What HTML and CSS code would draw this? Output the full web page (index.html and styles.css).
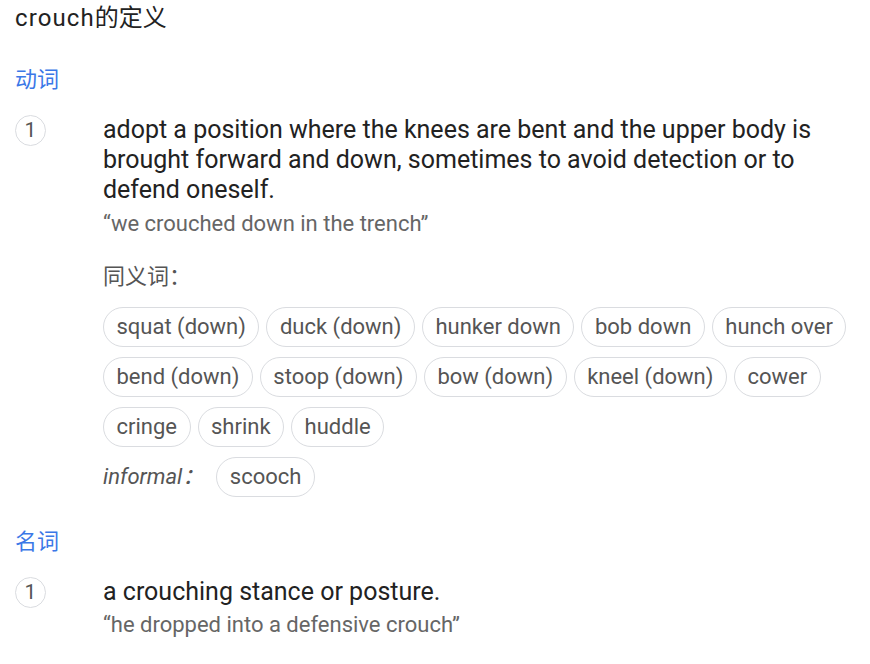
FILE: index.html
```html
<!DOCTYPE html>
<html lang="zh">
<head>
<meta charset="utf-8">
<link rel="stylesheet" href="styles.css">
</head>
<body>
<div class="page">
  <h1 class="title"><span class="headword">crouch</span>的定义</h1>

  <div class="pos">动词</div>
  <div class="sense">
    <div class="num">1</div>
    <div class="body">
      <div class="def">adopt a position where the knees are bent and the upper body is brought forward and down, sometimes to avoid detection or to defend oneself.</div>
      <div class="example">“we crouched down in the trench”</div>
      <div class="syn-label">同义词：</div>
      <div class="chips">
        <span class="chip">squat (down)</span>
        <span class="chip">duck (down)</span>
        <span class="chip">hunker down</span>
        <span class="chip">bob down</span>
        <span class="chip">hunch over</span>
        <span class="chip">bend (down)</span>
        <span class="chip">stoop (down)</span>
        <span class="chip">bow (down)</span>
        <span class="chip">kneel (down)</span>
        <span class="chip">cower</span>
        <span class="chip">cringe</span>
        <span class="chip">shrink</span>
        <span class="chip">huddle</span>
      </div>
      <div class="chips informal-row">
        <span class="reg">informal：</span>
        <span class="chip">scooch</span>
      </div>
    </div>
  </div>

  <div class="pos pos-noun">名词</div>
  <div class="sense">
    <div class="num">1</div>
    <div class="body">
      <div class="def">a crouching stance or posture.</div>
      <div class="example example-tight">“he dropped into a defensive crouch”</div>
    </div>
  </div>
</div>
</body>
</html>
```

FILE: styles.css
```css
html, body {
  margin: 0;
  padding: 0;
  background: #ffffff;
}

.page {
  padding: 0 15px;
  font-family: Roboto, "Noto Sans CJK SC", sans-serif;
  color: #222222;
  width: 840px;
}

.title {
  margin: 0;
  font-size: 24px;
  line-height: 36px;
  font-weight: 400;
  color: #222222;
}

.headword {
  letter-spacing: 1.1px;
}

.pos {
  margin-top: 29px;
  font-size: 22px;
  line-height: 30px;
  color: #3b78e7;
}

.pos-noun {
  margin-top: 30px;
}

.sense {
  display: flex;
  gap: 57px;
  margin-top: 20px;
}

.num {
  flex: none;
  box-sizing: border-box;
  width: 31px;
  height: 31px;
  border: 1px solid #dadce0;
  border-radius: 50%;
  font-size: 21px;
  line-height: 29px;
  text-align: center;
  color: #555555;
}

.body {
  flex: 1;
  min-width: 0;
}

.def {
  font-size: 25px;
  line-height: 30px;
  color: #222222;
}

.example {
  margin-top: 6px;
  font-size: 22px;
  line-height: 26px;
  color: #666666;
}

.example-tight {
  margin-top: 5px;
}

.syn-label {
  margin-top: 25px;
  font-size: 22px;
  line-height: 30px;
  color: #555555;
}

.chips {
  display: flex;
  flex-wrap: wrap;
  gap: 10px 7px;
  margin-top: 15px;
  align-items: center;
}

.informal-row {
  margin-top: 10px;
}

.chip {
  box-sizing: border-box;
  height: 40px;
  padding: 0 12.5px;
  border: 1px solid #dadce0;
  border-radius: 20px;
  font-size: 22px;
  line-height: 38px;
  color: #555555;
  white-space: nowrap;
}

.reg {
  font-style: italic;
  font-size: 22px;
  line-height: 40px;
  color: #555555;
  margin-right: 5px;
}
```
